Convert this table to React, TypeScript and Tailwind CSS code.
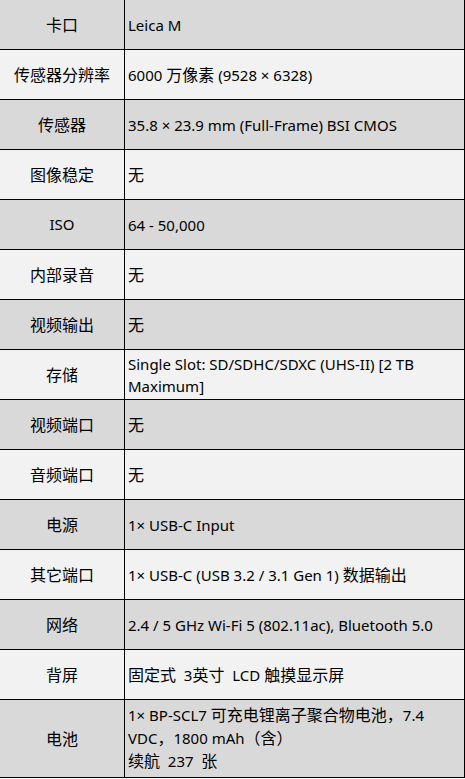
import React from "react";

const CJK = /([\u3000-\u303f\u3400-\u9fff\uff00-\uffef]+)/;

function T({ text }: { text: string }) {
  const parts = text.split(CJK);
  return (
    <>
      {parts.map((p, i) =>
        CJK.test(p) ? (
          <span key={i} className="text-[16px]">
            {p}
          </span>
        ) : (
          <React.Fragment key={i}>{p}</React.Fragment>
        )
      )}
    </>
  );
}

type Row = { label: string; value: React.ReactNode; cell?: string };

const NB = "\u00a0";

const rows: Row[] = [
  { label: "卡口", value: <T text="Leica M" /> },
  { label: "传感器分辨率", value: <T text="6000 万像素 (9528 × 6328)" /> },
  { label: "传感器", value: <T text="35.8 × 23.9 mm (Full-Frame) BSI CMOS" /> },
  { label: "图像稳定", value: <T text="无" /> },
  { label: "ISO", value: <T text="64 - 50,000" /> },
  { label: "内部录音", value: <T text="无" /> },
  { label: "视频输出", value: <T text="无" /> },
  { label: "存储", value: <T text="Single Slot: SD/SDHC/SDXC (UHS-II) [2 TB Maximum]" /> },
  { label: "视频端口", value: <T text="无" /> },
  { label: "音频端口", value: <T text="无" /> },
  { label: "电源", value: <T text="1× USB-C Input" /> },
  { label: "其它端口", value: <T text="1× USB-C (USB 3.2 / 3.1 Gen 1) 数据输出" /> },
  { label: "网络", value: <T text="2.4 / 5 GHz Wi-Fi 5 (802.11ac), Bluetooth 5.0" /> },
  { label: "背屏", value: <T text={`固定式${NB} 3英寸${NB} LCD 触摸显示屏`} /> },
  {
    label: "电池",
    cell: "leading-[23px] py-[4px]",
    value: (
      <>
        <T text="1× BP-SCL7 可充电锂离子聚合物电池，7.4 VDC，1800 mAh（含）" />
        <br />
        <T text={`续航${NB} 237${NB} 张`} />
      </>
    ),
  },
];

export default function App() {
  return (
    <div
      className="w-[465px] border-r border-black text-[15px] text-black"
      style={{ fontFamily: '"Noto Sans", "Noto Sans CJK SC", sans-serif' }}
    >
      {rows.map((r, i) => (
        <div
          key={i}
          className={`flex min-h-[50px] border-b border-black ${
            i % 2 === 0 ? "bg-[#d9d9d9]" : "bg-[#f2f2f2]"
          }`}
        >
          <div className="flex w-[125px] shrink-0 items-center justify-center border-r border-black px-[3px] text-center">
            <T text={r.label} />
          </div>
          <div
            className={`flex flex-1 items-center pl-[3px] pr-[3px] ${
              r.cell ?? "leading-[22px] py-[2px]"
            }`}
          >
            <div>{r.value}</div>
          </div>
        </div>
      ))}
    </div>
  );
}
